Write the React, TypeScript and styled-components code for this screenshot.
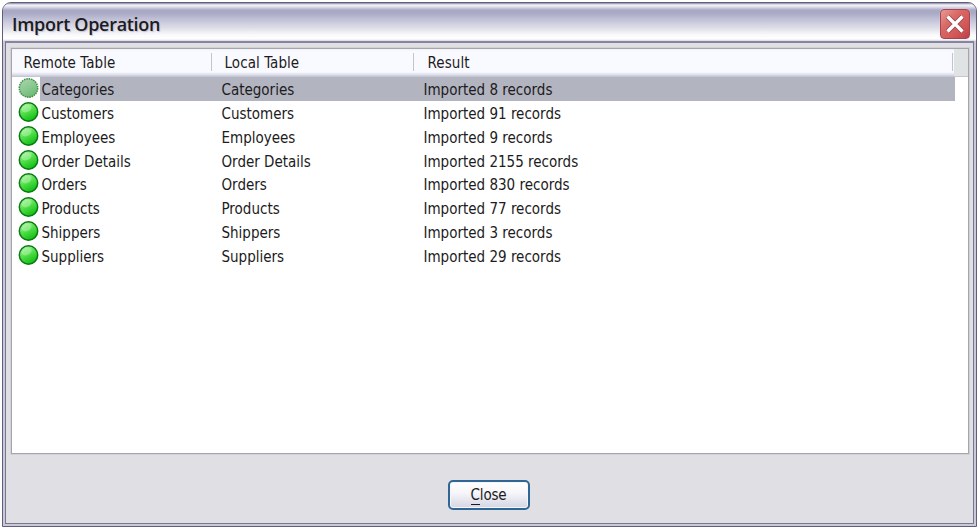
import React from "react";
import styled, { createGlobalStyle } from "styled-components";

const GlobalStyle = createGlobalStyle`
  * { box-sizing: border-box; }
  body { margin: 0; background: #fff; overflow: hidden; }
`;

const Screen = styled.div`
  width: 979px;
  height: 529px;
  padding: 2px;
  background: #fff;
  font-family: "DejaVu Sans Condensed", "DejaVu Sans", Tahoma, sans-serif;
  font-stretch: condensed;
  font-size: 15px;
  letter-spacing: 0;
  color: #1c1b22;
`;

const Window = styled.div`
  height: 525px;
  display: flex;
  flex-direction: column;
  border: 1px solid #5f5e7d;
  border-radius: 9px 9px 0 0;
  background: #c9c9d8;
  overflow: hidden;
`;

const TitleBar = styled.div`
  height: 38px;
  flex: none;
  display: flex;
  align-items: center;
  justify-content: space-between;
  padding: 3px 6px 0 9px;
  background: linear-gradient(#85859f 0, #f6f6fa 2px, #dddde9 4px, #a9a9c6 7px, #a9a9c6 10px, #c3c3d8 17px, #dedee9 25px, #fafafc 32px, #fff 36px, #d8d8e4 38px);
`;

const Title = styled.div`
  font-family: "Open Sans", sans-serif;
  font-stretch: normal;
  font-size: 18px;
  font-weight: 600;
  line-height: 30px;
  letter-spacing: -0.3px;
  text-shadow: 1px 1px 1px #c2c2d2;
  white-space: nowrap;
`;

const CloseBox = styled.button`
  width: 30px;
  height: 30px;
  padding: 0;
  display: flex;
  border: 1px solid #a84452;
  border-radius: 4px;
  background: linear-gradient(135deg, #e89a96, #d96a66 35%, #d25757 70%, #b84049);
  box-shadow: 0 0 1px #fff;
`;

const Body = styled.div`
  flex: 1;
  display: flex;
  flex-direction: column;
  align-items: center;
  margin: 0 2px 2px;
  border: 1px solid #77778f;
  border-top: 2px solid #85859f;
  background: #e0dfe3;
  padding: 5px 5px 0;
`;

const List = styled.div`
  width: 958px;
  height: 406px;
  border: 1px solid #a5a5aa;
  box-shadow: 0 0 0 1px #d2d1d6;
  background: #fff;
`;

const Header = styled.div`
  display: grid;
  grid-template-columns: 200px 202px 539px 1fr;
  height: 28px;
  background: linear-gradient(#f0f1f6, #f9faff 2px, #f9faff 23px, #d8dae7 26px, #bfc0d0 28px);
`;

const HeaderCell = styled.div<{ $inset: number }>`
  display: flex;
  justify-content: space-between;
  padding: 2px 0 0 ${(p) => p.$inset}px;
  line-height: 25px;
  letter-spacing: 0.08px;
  &::after {
    content: "";
    margin-top: 2px;
    width: 1px;
    height: 18px;
    background: #c3c4d0;
  }
`;

const HeaderGap = styled.div`
  height: 27px;
  margin-left: 1px;
  background: #e0e3e3;
`;

const Rows = styled.div`
  display: grid;
  grid-auto-rows: 23.86px;
`;

const Row = styled.div<{ $selected: boolean }>`
  display: grid;
  grid-template-columns: 28px 175px 202px 538px;
  line-height: 24px;
  white-space: nowrap;
  background: ${(p) => (p.$selected ? "linear-gradient(90deg, #fff 28px, #b2b4bf 28px, #b2b4bf 943px, #fff 943px)" : "transparent")};
`;

const Cell = styled.div<{ $inset: number }>`
  height: 23px;
  padding: 1px 0 0 ${(p) => p.$inset}px;
`;

const StatusIcon = styled.svg`
  display: block;
  margin: 0 0 0 6px;
`;

const Footer = styled.div`
  flex: 1;
  display: flex;
  justify-content: center;
  padding: 26px 2px 0 0;
`;

const CloseButton = styled.button`
  width: 82px;
  height: 30px;
  padding: 0;
  border: 2px solid #2e6796;
  border-radius: 5px;
  background: linear-gradient(#fff, #f7f7fb 40%, #d5d5e4);
  box-shadow: inset 0 0 0 1px #f4f6fb;
  font: inherit;
  letter-spacing: -0.2px;
  color: inherit;
`;

const Mnemonic = styled.span`
  border-bottom: 1px solid #1c1b22;
`;

function Status({ selected }: { selected: boolean }) {
  const id = selected ? "ball-selected" : "ball";
  return (
    <StatusIcon width="21" height="22" viewBox="0 0 21 22">
      <defs>
        <linearGradient id={id} x1="0.25" y1="0" x2="0.75" y2="1">
          <stop offset="0" stopColor={selected ? "#a6d3a8" : "#a8f29f"} />
          <stop offset="0.5" stopColor={selected ? "#8ac891" : "#4cdc45"} />
          <stop offset="1" stopColor={selected ? "#68b970" : "#08b90b"} />
        </linearGradient>
      </defs>
      <circle
        cx="10.5"
        cy="11"
        r="9.2"
        fill={`url(#${id})`}
        stroke={selected ? "#438e4b" : "#087b12"}
        strokeWidth="1.5"
        strokeDasharray={selected ? "1.6 0.8" : undefined}
      />
      {!selected && (
        <ellipse cx="8.6" cy="7.5" rx="5.2" ry="3.6" fill="#d9ffd2" opacity=".35" transform="rotate(-25 8.6 7.5)" />
      )}
    </StatusIcon>
  );
}

const tables = [
  { name: "Categories", count: 8 },
  { name: "Customers", count: 91 },
  { name: "Employees", count: 9 },
  { name: "Order Details", count: 2155 },
  { name: "Orders", count: 830 },
  { name: "Products", count: 77 },
  { name: "Shippers", count: 3 },
  { name: "Suppliers", count: 29 },
];

export default function App() {
  return (
    <Screen>
      <GlobalStyle />
      <Window>
        <TitleBar>
          <Title>Import Operation</Title>
          <CloseBox aria-label="Close window">
            <svg width="28" height="28" viewBox="0 0 28 28">
              <path d="M6.5 6.5 21.5 21.5M21.5 6.5 6.5 21.5" stroke="#94424a" strokeWidth="5" />
              <path d="M6.5 6.5 21.5 21.5M21.5 6.5 6.5 21.5" stroke="#fff" strokeWidth="3.4" />
            </svg>
          </CloseBox>
        </TitleBar>
        <Body>
          <List>
            <Header>
              <HeaderCell $inset={12}>Remote Table</HeaderCell>
              <HeaderCell $inset={13}>Local Table</HeaderCell>
              <HeaderCell $inset={14}>Result</HeaderCell>
              <HeaderGap />
            </Header>
            <Rows>
              {tables.map((t, i) => (
                <Row key={t.name} $selected={i === 0}>
                  <Status selected={i === 0} />
                  <Cell $inset={2}>{t.name}</Cell>
                  <Cell $inset={7}>{t.name}</Cell>
                  <Cell $inset={7}>Imported {t.count} records</Cell>
                </Row>
              ))}
            </Rows>
          </List>
          <Footer>
            <CloseButton>
              <Mnemonic>C</Mnemonic>lose
            </CloseButton>
          </Footer>
        </Body>
      </Window>
    </Screen>
  );
}
